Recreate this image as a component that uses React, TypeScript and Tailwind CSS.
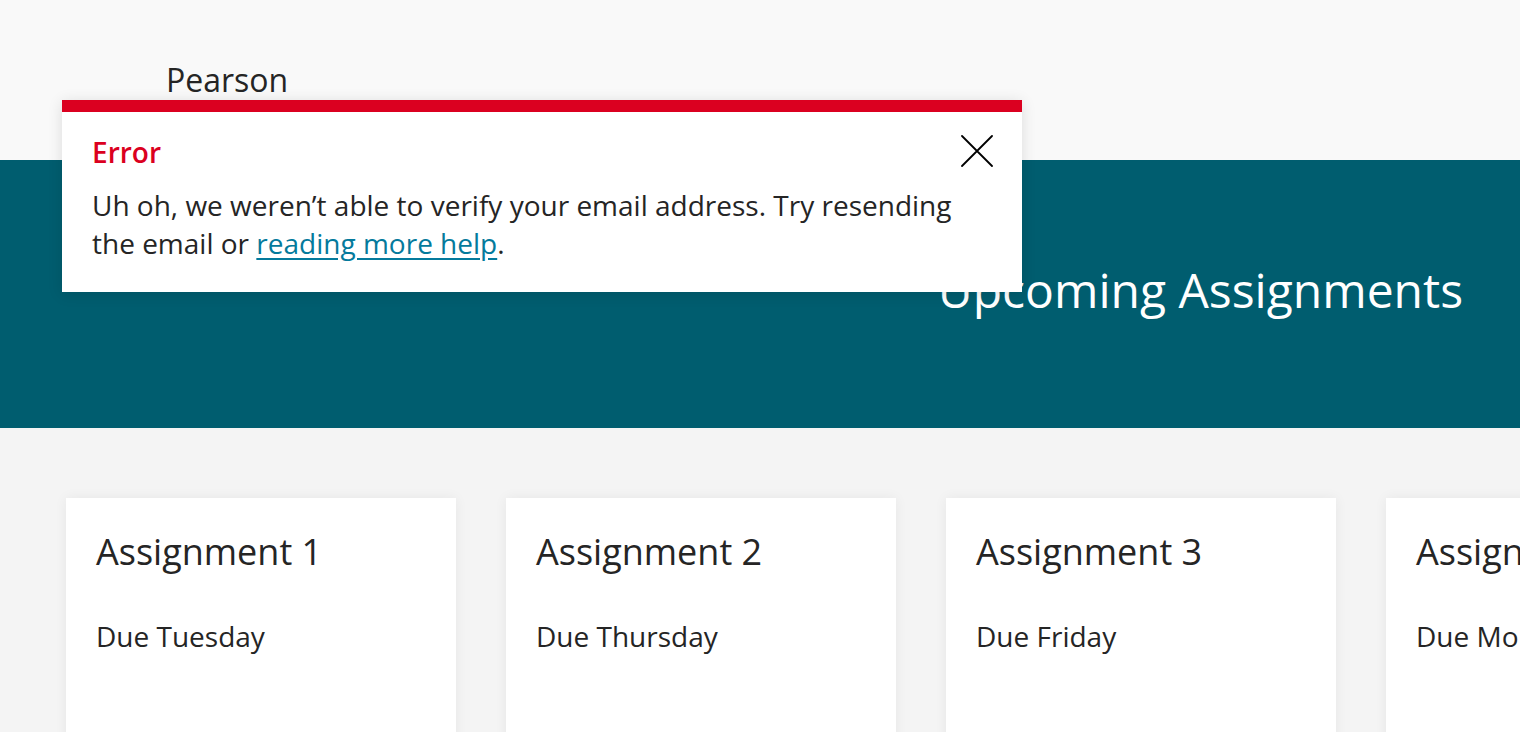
const assignments = [
  { title: "Assignment 1", due: "Due Tuesday" },
  { title: "Assignment 2", due: "Due Thursday" },
  { title: "Assignment 3", due: "Due Friday" },
  { title: "Assignment 4", due: "Due Monday" },
];

export default function App() {
  return (
    <div
      className="relative h-[732px] w-[1520px] overflow-hidden bg-[#f4f4f4] text-[#252525]"
      style={{ fontFamily: '"Open Sans", "Liberation Sans", sans-serif' }}
    >
      <header className="h-[160px] bg-[#f9f9f9] pl-[166px] pt-[58px]">
        <span className="text-[32px] leading-[44px] text-[#252525]">Pearson</span>
      </header>

      <section className="flex h-[268px] items-center justify-end bg-[#005d6f] pb-[9px] pr-[57px]">
        <h1 className="text-[48px] leading-[64px] text-white">Upcoming Assignments</h1>
      </section>

      <div className="flex gap-[50px] pl-[66px] pt-[70px]">
        {assignments.map((a) => (
          <div key={a.title} className="h-[300px] w-[390px] shrink-0 overflow-hidden bg-white px-[30px] pt-[28px] shadow-[0_0_12px_rgba(0,0,0,0.06)]">
            <h2 className="whitespace-nowrap text-[36px] leading-[52px]">{a.title}</h2>
            <p className="mt-[38px] whitespace-nowrap text-[28px] leading-[40px]">{a.due}</p>
          </div>
        ))}
      </div>

      <div className="absolute left-[62px] top-[100px] w-[960px] bg-white shadow-[0_2px_14px_rgba(0,0,0,0.12)]">
        <div className="h-[12px] bg-[#db0020]" />
        <div className="relative pb-[30px] pl-[30px] pr-[50px] pt-[22px]">
          <p className="text-[28px] font-semibold leading-[36px] text-[#db0020]">Error</p>
          <p className="mt-[16px] text-[28px] leading-[38px] text-[#252525]">
            Uh oh, we weren’t able to verify your email address. Try resending the email or{" "}
            <a href="#" className="text-[#047a9c] underline underline-offset-[4px]">
              reading more help
            </a>
            .
          </p>
          <button type="button" className="absolute left-[899px] top-[23px] text-black" aria-label="Close">
            <svg width="32" height="32" viewBox="0 0 32 32" fill="none" stroke="currentColor" strokeWidth="1.8" strokeLinecap="round">
              <path d="M1 1L31 31M31 1L1 31" />
            </svg>
          </button>
        </div>
      </div>
    </div>
  );
}
